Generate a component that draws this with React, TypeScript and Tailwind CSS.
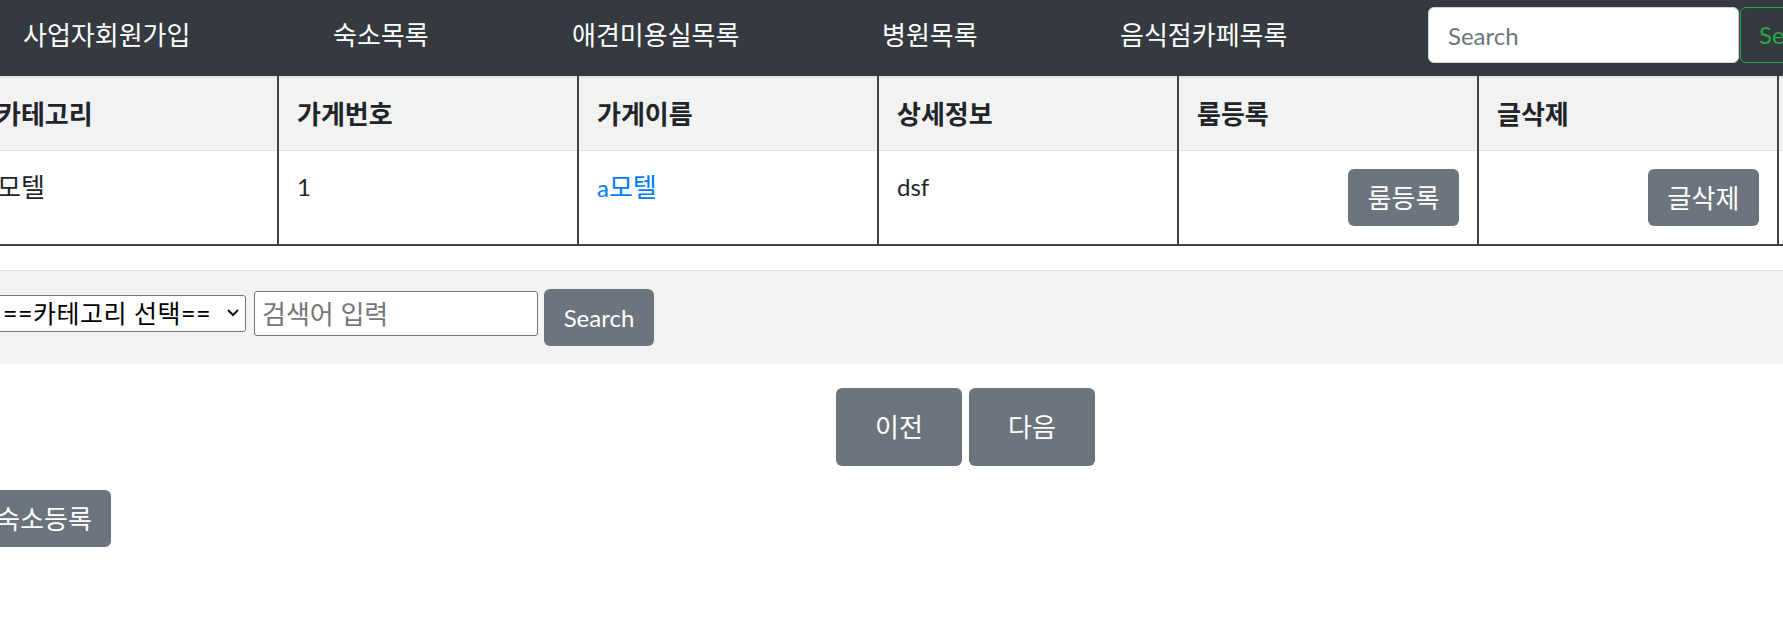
import React from "react";

const navLinks = ["사업자회원가입", "숙소목록", "애견미용실목록", "병원목록", "음식점카페목록"];

function GrayButton({ children, className = "" }: { children: React.ReactNode; className?: string }) {
  return (
    <button
      type="button"
      className={`inline-flex items-center justify-center bg-[#6c757d] text-white rounded-[6px] leading-[36px] shrink-0 ${className}`}
    >
      {children}
    </button>
  );
}

export default function App() {
  const th =
    "border-x-2 border-x-[#444] border-b border-b-[#dee2e6] text-left font-bold text-[26px] px-[18px] py-[18px] align-top";
  const td = "border-x-2 border-x-[#444] px-[18px] py-[18px] align-top";
  return (
    <div className="w-[1783px] h-[635px] overflow-hidden bg-white font-['Lato','Noto_Sans_CJK_KR',sans-serif] text-[24px] leading-[36px] text-[#212529]">
      <nav className="h-[76px] w-[1783px] bg-[#343a40] flex items-center pl-[23px] pt-[1px] pb-[7px] whitespace-nowrap overflow-hidden">
        <div className="w-[1263px] grid grid-cols-[310px_239px_310px_238px_1fr] text-white text-[26px] shrink-0">
          {navLinks.map((l) => (
            <a key={l} className="whitespace-nowrap">
              {l}
            </a>
          ))}
        </div>
        <div className="ml-[142px] flex items-center shrink-0">
          <input
            placeholder="Search"
            className="w-[311px] h-[56px] rounded-[6px] bg-white border border-[#ced4da] px-[19px] text-[24px] outline-none placeholder:text-[#6c757d] shrink-0"
          />
          <button
            type="button"
            className="ml-[1px] h-[56px] w-[110px] px-[18px] text-left text-[24px] border-[1.5px] border-[#28a745] text-[#28a745] rounded-[6px] shrink-0"
          >
            Search
          </button>
        </div>
      </nav>

      <div className="-ml-[23px] w-[1977px]">
        <table className="table-fixed border-collapse w-[1977px] border-t-2 border-t-[#dee2e6]">
          <colgroup>
            <col className="w-[300px]" />
            <col className="w-[300px]" />
            <col className="w-[300px]" />
            <col className="w-[300px]" />
            <col className="w-[300px]" />
            <col className="w-[300px]" />
            <col />
          </colgroup>
          <thead>
            <tr className="bg-[#f2f2f2]">
              <th className={th}>카테고리</th>
              <th className={th}>가게번호</th>
              <th className={th}>가게이름</th>
              <th className={th}>상세정보</th>
              <th className={th}>룸등록</th>
              <th className={th}>글삭제</th>
              <th className={th}></th>
            </tr>
          </thead>
          <tbody>
            <tr className="border-b-2 border-b-[#444]">
              <td className={`${td} text-[26px]`}>모텔</td>
              <td className={td}>1</td>
              <td className={td}>
                <a className="text-[#007bff]">
                  a<span className="text-[26px]">모텔</span>
                </a>
              </td>
              <td className={td}>dsf</td>
              <td className={`${td} text-right`}>
                <GrayButton className="w-[111px] h-[57px] text-[26px]">룸등록</GrayButton>
              </td>
              <td className={`${td} text-right`}>
                <GrayButton className="w-[111px] h-[57px] text-[26px]">글삭제</GrayButton>
              </td>
              <td className={td}></td>
            </tr>
          </tbody>
        </table>

        <div className="mt-[24px] border-t border-t-[#dee2e6] bg-[#f2f2f2] py-[18px] flex items-start">
          <div className="relative mt-[6px] shrink-0">
            <select className="appearance-none w-[269px] h-[37px] bg-white border border-[#767676] rounded-[3px] pl-[25px] pr-[28px] text-[25px] tracking-[0.5px] leading-[35px] text-black outline-none">
              <option>==카테고리 선택==</option>
            </select>
            <svg
              className="absolute right-[6px] top-[13px] pointer-events-none"
              width="14"
              height="10"
              viewBox="0 0 14 10"
            >
              <path d="M2 2 L7 7 L12 2" fill="none" stroke="#111" strokeWidth="2" />
            </svg>
          </div>
          <input
            placeholder="검색어 입력"
            className="ml-[8px] mt-[2px] w-[284px] h-[45px] bg-white border border-[#767676] rounded-[3px] px-[7px] text-[26px] outline-none placeholder:text-[#757575] shrink-0"
          />
          <GrayButton className="ml-[6px] w-[110px] h-[57px] text-[24px]">Search</GrayButton>
        </div>

        <div className="mt-[24px] flex justify-center gap-[7px]">
          <GrayButton className="w-[126px] h-[78px] text-[26px]">이전</GrayButton>
          <GrayButton className="w-[126px] h-[78px] text-[26px]">다음</GrayButton>
        </div>

        <div className="mt-[24px]">
          <GrayButton className="w-[134px] h-[57px] text-[26px]">숙소등록</GrayButton>
        </div>
      </div>
    </div>
  );
}
